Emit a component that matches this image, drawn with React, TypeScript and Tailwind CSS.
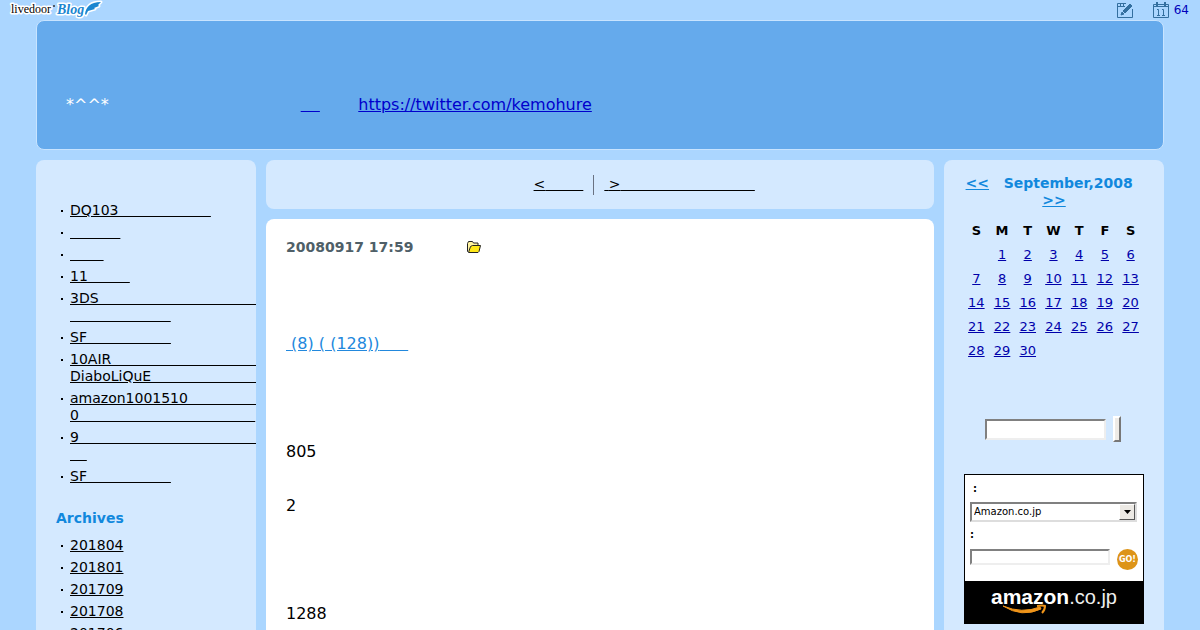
import React from "react";

interface LinkItem {
  lines: string[];
}

// blank run, each unit is 0.6em wide
const blank = (n: number): string => "\u2002\u200A".repeat(n);
const nb = "\u00A0";

const recent: LinkItem[] = [
  { lines: ["DQ103" + blank(11)] },
  { lines: [blank(6)] },
  { lines: [blank(4)] },
  { lines: ["11" + blank(5)] },
  { lines: ["3DS" + blank(19), blank(12)] },
  { lines: ["SF" + blank(10)] },
  { lines: ["10AIR" + blank(18), "DiaboLiQuE" + blank(13)] },
  { lines: ["amazon1001510" + blank(9), "0" + blank(21)] },
  { lines: ["9" + blank(22), blank(2)] },
  { lines: ["SF" + blank(10)] },
];

const archives: LinkItem[] = ["201804", "201801", "201709", "201708", "201706"].map((m) => ({ lines: [m] }));

const days = ["S", "M", "T", "W", "T", "F", "S"];
const weeks = [0, 1, 2, 3, 4].map((w) => days.map((_, d) => w * 7 + d));

function SideList({ items }: { items: LinkItem[] }) {
  return (
    <ul>
      {items.map((item, i) => (
        <li key={i} className="flex items-start mb-[5px] pl-[5px] leading-[17px]">
          <span className="w-[2px] h-[2px] mt-2 mr-[7px] bg-black shrink-0"></span>
          <a href="#" className="underline whitespace-nowrap text-black">
            {item.lines.map((line, j) => (
              <span key={j}>
                {j > 0 && <br />}
                {line}
              </span>
            ))}
          </a>
        </li>
      ))}
    </ul>
  );
}

function BlogLogo() {
  return (
    <svg width="96" height="20" viewBox="0 0 96 20" aria-label="livedoor Blog">
      <g stroke="#fff" strokeWidth="3" strokeLinejoin="round" paintOrder="stroke">
        <text x="3" y="13" fontFamily="Liberation Serif" fontSize="12" fill="#000">
          livedoor
        </text>
        <text x="49" y="14" fontFamily="Liberation Serif" fontWeight="700" fontStyle="italic" fontSize="14" fill="#1b86d0">
          Blog
        </text>
        <path d="M77 14 C78 7 82 2 93 2 L90 5 L91 6 L86 8 L87 9 L80 11 L78 15 Z" fill="#1b86d0" />
      </g>
      <circle cx="46" cy="6" r="1" fill="#333" />
    </svg>
  );
}

function EditIcon() {
  return (
    <svg width="16" height="16" viewBox="0 0 16 16" fill="none" stroke="#336f9f">
      <path d="M9 1.500H.5v14h15V7" />
      <path d="M.5 4.500H8M3.500 2v2M6.500 2v2" />
      <path d="M6 9L13 2l2 2L8 11z" fill="#336f9f" />
      <path d="M5 10L7 12L4 13z" fill="#336f9f" />
    </svg>
  );
}

function CalendarIcon() {
  return (
    <svg width="16" height="16" viewBox="0 0 16 16" fill="none" stroke="#336f9f">
      <path d="M.5 2.500h15v13H.5z" />
      <path d="M1 4.500h14" />
      <path d="M4 0v4M12 0v4" strokeWidth="2" />
      <path d="M4 7.500h1.500V13M4 13.500h3M9 7.500h1.500V13M9 13.500h3" />
    </svg>
  );
}

function FolderIcon() {
  return (
    <svg width="14" height="12" viewBox="0 0 14 12" stroke="#222" strokeLinejoin="round">
      <path d="M.5 10.500v-8l1-2h4l1 1.500h4.500v2" fill="#fff3a0" />
      <path d="M.5 10.500v-6M1.500 11.500L3.500 5.500l2-1h8l-1.500 6-1 1z" fill="#ffe818" />
    </svg>
  );
}

function AmazonLogo() {
  return (
    <svg width="128" height="36" viewBox="0 0 128 36" aria-label="amazon.co.jp">
      <text x="1" y="23" fontFamily="Liberation Sans" fontWeight="700" fontSize="21" fill="#fff">
        amazon<tspan fontWeight="400" fontSize="20" fill="#eee">.co.jp</tspan>
      </text>
      <path d="M13 25 Q32 37 51 28 L50 26 Q32 33 13 25" fill="#f0951a" stroke="#f0951a" />
      <path d="M47 25 Q53 24 55 25 Q55 29 52 32" fill="none" stroke="#f0951a" strokeWidth="2" />
    </svg>
  );
}

function App() {
  return (
    <div className="min-h-screen flex flex-col bg-[#abd6ff] overflow-hidden text-[14px] leading-[17px] text-black font-['DejaVu_Sans',sans-serif]">
      <div className="flex justify-between items-start h-5 pl-2 pr-[11px]">
        <a href="#"><BlogLogo /></a>
        <div className="flex items-center h-5 text-[12px] text-[#0000bb]">
          <a href="#" aria-label="Edit" className="mr-5"><EditIcon /></a>
          <a href="#" className="flex items-center gap-[5px]"><CalendarIcon />64</a>
        </div>
      </div>

      <header className="mx-9 h-[130px] pl-[29px] pt-[74px] rounded-lg border border-[#c8e4ff] bg-[#65aaec] text-[16px] leading-5 text-white whitespace-nowrap">
        *^^*{blank(20)}
        <a href="#" className="underline text-[#0000cc]">{blank(2)}</a>
        {blank(4)}
        <a href="https://twitter.com/kemohure" className="underline text-[#0000cc]">https://twitter.com/kemohure</a>
      </header>

      <div className="grow mx-9 mt-[10px] grid grid-cols-[220px_minmax(0,1fr)_220px] gap-[10px]">
        <aside className="rounded-t-lg bg-[#d4e9ff] pl-5 pt-[42px] overflow-hidden">
          <SideList items={recent} />
          <h2 className="font-bold text-[#1188dd] mt-[25px] mb-[10px]">Archives</h2>
          <SideList items={archives} />
        </aside>

        <main className="flex flex-col gap-[10px]">
          <nav className="flex justify-center items-center h-[49px] rounded-lg bg-[#d4e9ff] whitespace-nowrap">
            <span>{nb + blank(10)}</span>
            <a href="#" className="underline">&lt;{nb + blank(4)}</a>
            <span className="w-px h-5 mx-[10px] bg-gray-500"></span>
            <a href="#" className="underline">{nb}&gt;{blank(16)}</a>
          </nav>
          <article className="grow rounded-t-lg bg-white px-5 pt-5">
            <div className="flex items-center h-4 font-bold text-[#4f5f68]">
              20080917 17:59
              <a href="#" aria-label="Category" className="ml-[54px]"><FolderIcon /></a>
            </div>
            <h1 className="mt-[75px] text-[16px] leading-7 text-[#2288dd]">
              <a href="#" className="underline">{nb}(8) ( (128)){blank(3)}</a>
            </h1>
            <div className="mt-20 text-[16px] leading-[27px]">
              <p>805</p>
              <br />
              <p>2</p>
              <br />
              <br />
              <br />
              <p>1288</p>
            </div>
          </article>
        </main>

        <aside className="rounded-t-lg bg-[#d4e9ff] px-5 pt-[15px]">
          <h2 className="font-bold text-center text-[#1188dd]">
            <a href="#" className="underline">&lt;&lt;</a>
            {nb + nb + nb}September,2008{nb + nb}{" "}
            <a href="#" className="underline">&gt;&gt;</a>
          </h2>
          <table className="w-full mt-[10px] table-fixed text-center text-[13px] leading-6">
            <thead>
              <tr>
                {days.map((d, i) => (
                  <th key={i} className="p-0 pr-px">{d}</th>
                ))}
              </tr>
            </thead>
            <tbody>
              {weeks.map((week, i) => (
                <tr key={i}>
                  {week.map((d) => (
                    <td key={d} className="p-0 pr-px">
                      {d > 0 && d <= 30 && <a href="#" className="underline text-[#0000aa]">{d}</a>}
                    </td>
                  ))}
                </tr>
              ))}
            </tbody>
          </table>

          <form className="flex items-center justify-center gap-[7px] mt-[53px] pr-[2px]">
            <input type="text" aria-label="Search" className="w-[121px] h-[21px] px-1 bg-white border-2 border-t-[#808080] border-l-[#808080] border-r-[#eeeeee] border-b-[#eeeeee]" />
            <button type="button" aria-label="Search" className="w-2 h-[26px] bg-[#eeebe7] border-2 border-t-white border-l-white border-r-[#777777] border-b-[#777777]"></button>
          </form>

          <form className="mt-8 border border-black bg-white text-[10px] leading-4">
            <div className="px-[5px] pt-[6px] h-[106px]">
              <label htmlFor="store" className="block pl-[3px] font-bold">:</label>
              <div className="relative mt-[5px]">
                <select id="store" className="appearance-none block w-[167px] h-5 pl-[2px] bg-white border-2 border-t-[#808080] border-l-[#808080] border-r-[#dddddd] border-b-[#dddddd]">
                  <option>Amazon.co.jp</option>
                </select>
                <span className="absolute right-[3px] top-[2px] w-4 h-4 flex items-center justify-center pointer-events-none bg-[#ece9e4] border border-t-white border-l-white border-r-[#555555] border-b-[#555555]">
                  <svg width="7" height="4" viewBox="0 0 7 4"><path d="M0 0h7L3.500 4z" /></svg>
                </span>
              </div>
              <label htmlFor="keyword" className="block mt-[5px] font-bold">:</label>
              <div className="flex gap-[7px] mt-[6px]">
                <input id="keyword" type="text" className="w-[140px] h-4 px-1 bg-white border-2 border-t-[#808080] border-l-[#808080] border-r-[#eeeeee] border-b-[#eeeeee]" />
                <button type="button" className="w-[21px] h-[21px] rounded-full bg-[#dd9418] text-white text-[8px] leading-none font-bold flex items-center justify-center">GO!</button>
              </div>
            </div>
            <a href="#" className="flex justify-center h-[42px] bg-black"><AmazonLogo /></a>
          </form>
        </aside>
      </div>
    </div>
  );
}

export default App;
